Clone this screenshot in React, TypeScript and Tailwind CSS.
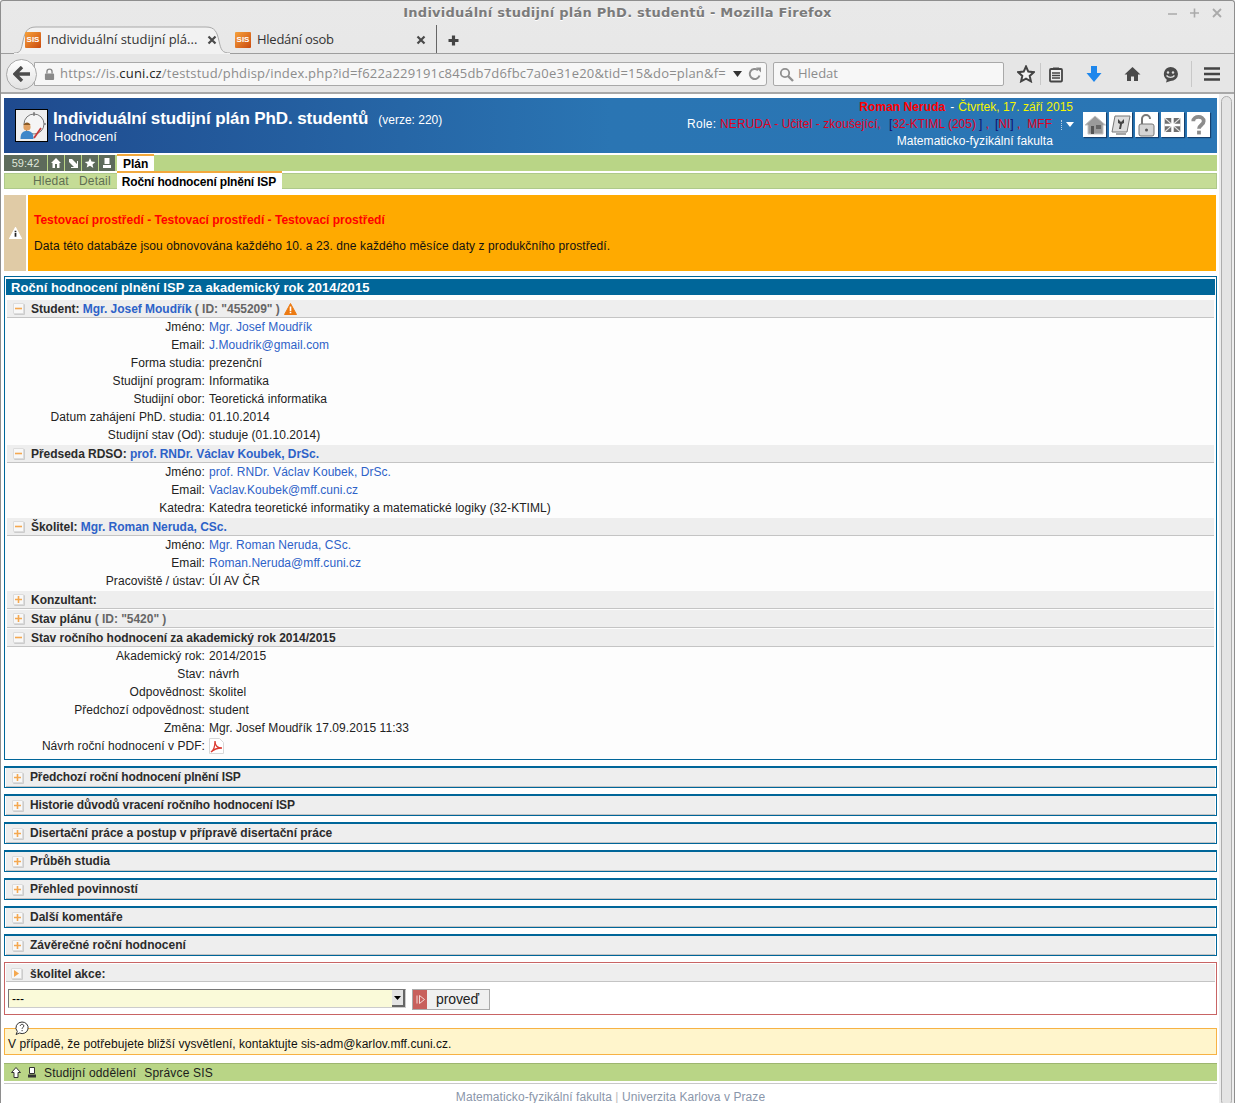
import type { ReactNode } from 'react'

const FONT = "font-['Liberation_Sans',Arial,sans-serif]"

function SisIcon() {
  return (
    <span className="flex h-4 w-4 shrink-0 items-center justify-center rounded-[1px] bg-gradient-to-br from-[#f6a13a] to-[#c9490f] font-['Liberation_Sans',sans-serif] text-[8px] font-bold leading-none text-white">
      SIS
    </span>
  )
}

function CloseX() {
  return (
    <svg width="10" height="10" viewBox="0 0 10 10">
      <path d="M1.500 1.500l7 7M8.500 1.500l-7 7" stroke="#4a4a4a" strokeWidth="2.200" />
    </svg>
  )
}

function TitleBar() {
  return (
    <div className="relative flex h-[24px] shrink-0 items-center justify-center">
      <span className="font-['DejaVu_Sans',sans-serif] text-[13px] font-bold tracking-[0.25px] text-[#7b7b7b] [text-shadow:0_1px_0_#fff]">
        Individuální studijní plán PhD. studentů - Mozilla Firefox
      </span>
      <div className="absolute right-[12px] top-[7px] flex items-center gap-[12px]">
        <svg width="10" height="10" viewBox="0 0 10 10"><path d="M0 6h9" stroke="#aaa" strokeWidth="1.600" /></svg>
        <svg width="10" height="10" viewBox="0 0 10 10"><path d="M0 5h9M4.500 .5v9" stroke="#aaa" strokeWidth="1.600" /></svg>
        <svg width="10" height="10" viewBox="0 0 10 10"><path d="M1 1l8 8M9 1l-8 8" stroke="#aaa" strokeWidth="1.800" /></svg>
      </div>
    </div>
  )
}

function TabBar() {
  return (
    <div className="flex h-[29px] shrink-0 items-stretch border-b border-[#9d9d9d] pl-[13px]">
      <div className="relative flex w-[216px] items-center pl-[11px] pr-[13px] pt-[2px]">
        <svg className="absolute -bottom-px left-0 h-[29px] w-[216px]" viewBox="0 0 216 29" preserveAspectRatio="none">
          <path d="M0 28c7 0 7-3 9-12 2-9 4-14 13-14h170c9 0 11 5 13 14 2 9 3 12 11 12v1H0z" fill="#f2f2f2" stroke="#a8a8a8" />
          <path d="M0 29h216" stroke="#f2f2f2" strokeWidth="2" />
        </svg>
        <span className="relative z-10 flex w-full items-center">
          <SisIcon />
          <span className="ml-[6px] flex-1 font-['Open_Sans',sans-serif] text-[13px] text-[#333]">Individuální studijní plá...</span>
          <CloseX />
        </span>
      </div>
      <div className="flex w-[207px] items-center border-r border-[#666] pl-[5px] pr-[10px] pt-[2px]">
        <SisIcon />
        <span className="ml-[6px] flex-1 font-['Open_Sans',sans-serif] text-[13px] tracking-[-0.25px] text-[#333]">Hledání osob</span>
        <CloseX />
      </div>
      <div className="flex items-center pl-[11px] pt-[2px]">
        <svg width="11" height="11" viewBox="0 0 11 11"><path d="M5.500 .5v10M.5 5.500h10" stroke="#444" strokeWidth="3.200" /></svg>
      </div>
    </div>
  )
}

function NavBar() {
  return (
    <div className="flex h-[40px] shrink-0 items-center border-b-2 border-[#a8a8a8] bg-[#e6e6e6] pl-[5px] pr-[9px] pt-[2px]">
      <div className="z-10 flex h-[31px] w-[31px] items-center justify-center rounded-full border border-[#a9a9a9] bg-gradient-to-b from-white to-[#e2e2e2]">
        <svg width="18" height="16" viewBox="0 0 18 16"><path d="M9 1L2 8l7 7M3 8h14" stroke="#4c4c4c" strokeWidth="3.400" fill="none" /></svg>
      </div>
      <div className="-ml-[3px] flex h-[24px] w-[733px] items-center rounded-r-[3px] border border-[#a9a9a9] bg-[#f7f7f7] pl-[9px] pr-[4px]">
        <svg width="11" height="12" viewBox="0 0 12 13"><rect x="1" y="6" width="10" height="7" rx="1" fill="#8a8a8a" /><path d="M3.200 6V4a2.800 2.800 0 015.600 0v2" stroke="#8a8a8a" strokeWidth="1.500" fill="none" /></svg>
        <span className="ml-[5px] flex-1 whitespace-nowrap font-['Open_Sans',sans-serif] text-[13px] tracking-[0.19px] text-[#8c8c8c]">
          https://is.<span className="text-[#222]">cuni.cz</span>/teststud/phdisp/index.php?id=f622a229191c845db7d6fbc7a0e31e20&amp;tid=15&amp;do=plan&amp;f=
        </span>
        <svg className="ml-[4px]" width="9" height="6" viewBox="0 0 9 6"><path d="M0 0h9L4.500 6z" fill="#333" /></svg>
        <svg className="ml-[6px]" width="14" height="14" viewBox="0 0 14 14"><path d="M11.500 8.500A5 5 0 1 1 10 3.200" stroke="#8f8f8f" strokeWidth="2" fill="none" /><path d="M8 .5h5v5z" fill="#8f8f8f" /></svg>
      </div>
      <div className="ml-[6px] flex h-[24px] w-[231px] items-center rounded-[2px] border border-[#a9a9a9] bg-[#f7f7f7] pl-[5px]">
        <svg width="15" height="15" viewBox="0 0 15 15"><circle cx="6" cy="6" r="4.200" stroke="#909090" strokeWidth="1.800" fill="none" /><path d="M9 9l5 5" stroke="#909090" strokeWidth="2.400" /></svg>
        <span className="ml-[4px] font-['Open_Sans',sans-serif] text-[13px] text-[#8c8c8c]">Hledat</span>
      </div>
      <div className="ml-[13px] flex h-[26px] items-center">
        <svg width="18" height="18" viewBox="0 0 18 18"><path d="M9 1.500l2.300 5.100 5.500.6-4.100 3.700 1.200 5.400L9 13.600l-4.900 2.700 1.200-5.400L1.200 7.200l5.500-.6z" fill="#f4f4f4" stroke="#444" strokeWidth="2" /></svg>
        <span className="ml-[5px] h-[22px] w-px bg-[#c8c8c8]" />
        <svg className="ml-[7px]" width="16" height="17" viewBox="0 0 16 17"><rect x="2" y="3" width="12" height="12.500" rx="1" fill="#eee" stroke="#444" strokeWidth="1.800" /><path d="M5 1.500h6v2H5z" fill="#444" /><path d="M4 7h8M4 9.500h8M4 12h8" stroke="#444" strokeWidth="1.300" /></svg>
        <svg className="ml-[22px]" width="16" height="18" viewBox="0 0 16 18"><path d="M5 1h6v7h4.500L8 17 .5 8H5z" fill="#1e87ec" /></svg>
        <svg className="ml-[22px]" width="17" height="16" viewBox="0 0 17 16"><path d="M8.500 1L.5 8.500h2.500V15h4v-4.500h3V15h4V8.500h2.500z" fill="#4a4a4a" /></svg>
        <svg className="ml-[21px]" width="17" height="17" viewBox="0 0 17 17"><path d="M8.500 1a7.500 7 0 110 14L4 16.500l.8-2.800A7 7 0 018.500 1z" fill="#4a4a4a" /><circle cx="6" cy="6.500" r="1.200" fill="#ddd" /><circle cx="11" cy="6.500" r="1.200" fill="#ddd" /><path d="M4.500 9.500c2 2.500 6 2.500 8 0" stroke="#ddd" strokeWidth="1.400" fill="none" /></svg>
        <span className="ml-[12px] h-[26px] w-px bg-[#c8c8c8]" />
        <svg className="ml-[12px]" width="16" height="14" viewBox="0 0 16 14"><path d="M0 1.500h16M0 7h16M0 12.500h16" stroke="#444" strokeWidth="2.600" /></svg>
      </div>
    </div>
  )
}

function HeaderButton({ children }: { children: ReactNode }) {
  return (
    <div className="flex h-[25px] w-[23px] items-center justify-center bg-white shadow-[1px_1px_1px_#16406e]">
      {children}
    </div>
  )
}

function PageHeader() {
  return (
    <div className="flex h-[55px] items-stretch bg-gradient-to-r from-[#1f4a8e] via-[#2a75b3] via-50% to-[#2a76b5] text-white">
      <div className="ml-[11px] mt-[11px] flex h-[33px] w-[33px] items-center justify-center border border-black bg-[#efefef]">
        <svg width="28" height="28" viewBox="0 0 28 28">
          <circle cx="16" cy="12" r="10" fill="#f5f5f5" stroke="#777" strokeWidth="1" />
          <path d="M16 0v4M26 12h2" stroke="#555" />
          <circle cx="9" cy="15" r="3.600" fill="#e0a163" />
          <path d="M5.500 13c1-3.500 6-3.500 7 0z" fill="#8a5a26" />
          <path d="M2.500 27c0-7 3-8 6.500-8s6.500 1 6.500 8z" fill="#3f87c9" />
          <path d="M16 26l7-10" stroke="#c83a3a" strokeWidth="1.800" />
        </svg>
      </div>
      <div className="ml-[5px] mt-[10px] flex flex-col">
        <div className="flex items-baseline">
          <span className="text-[17px] font-bold leading-[21px] tracking-[-0.1px]">Individuální studijní plán PhD. studentů</span>
          <span className="ml-[10px] text-[12px]">(verze: 220)</span>
        </div>
        <span className="ml-px text-[13px] leading-[16px]">Hodnocení</span>
      </div>
      <div className="ml-auto flex flex-col items-end pt-px text-[12px] leading-[17px]">
        <div className="mr-px flex">
          <span className="font-bold tracking-[0.05px] text-[#f00]">Roman Neruda</span>
          <span className="ml-[5px] text-white">-</span>
          <span className="ml-[4px] text-[#f5f500]">Čtvrtek, 17. září 2015</span>
        </div>
        <div className="flex items-center whitespace-pre">
          <span className="tracking-[0.3px]">Role: </span>
          <span className="tracking-[0.1px] text-[#e3001e]">NERUDA - Učitel - zkoušející,</span>
          <span className="ml-[8px] text-[#10106e]">[</span>
          <span className="text-[#e3001e]">32-KTIML (205)</span>
          <span className="ml-[3px] text-[#10106e]">]</span>
          <span className="text-[#e3001e]"> ,</span>
          <span className="ml-[6px] text-[#10106e]">[</span>
          <span className="text-[#e3001e]">NI</span>
          <span className="text-[#10106e]">]</span>
          <span className="text-[#e3001e]"> ,</span>
          <span className="ml-[7px] text-[#e3001e]">MFF</span>
          <span className="ml-[9px] h-[10px] border-l border-dotted border-[#bcd]" />
          <svg className="ml-[4px]" width="8" height="5" viewBox="0 0 8 5"><path d="M0 0h8L4 5z" fill="#fff" /></svg>
        </div>
        <div className="mr-[21px] tracking-[0.08px]">Matematicko-fyzikální fakulta</div>
      </div>
      <div className="ml-[9px] mr-[7px] mt-[14px] flex h-[25px] gap-[3px]">
        <HeaderButton>
          <svg width="22" height="22" viewBox="0 0 22 22"><path d="M11 2L1 11h3v9h15v-9h2.500z" fill="#9a9a9a" stroke="#c4c4c4" /><rect x="7" y="12" width="3" height="8" fill="#555" /><rect x="12" y="11" width="5" height="4" fill="#666" /></svg>
        </HeaderButton>
        <HeaderButton>
          <svg width="20" height="22" viewBox="0 0 20 22"><path d="M4 2h15l-3 16H1z" fill="#ddd" stroke="#777" /><path d="M7 5l3 3 3-3v4l-2 1-1 5H8l1-5-2-1z" fill="#444" /><path d="M5 20h10" stroke="#888" strokeWidth="1.500" /></svg>
        </HeaderButton>
        <HeaderButton>
          <svg width="20" height="24" viewBox="0 0 20 24"><path d="M5 11V6a4 4 0 018 0" stroke="#777" strokeWidth="2" fill="none" /><rect x="2" y="11" width="15" height="12" rx="2" fill="#d4d4d4" stroke="#777" /><circle cx="9.500" cy="17" r="1.500" fill="#555" /></svg>
        </HeaderButton>
        <HeaderButton>
          <svg width="17" height="14" viewBox="0 0 19 17">
            <rect x="0" y="0" width="19" height="17" fill="#6f6f6f" />
            <path d="M0 0l19 17M19 0L0 17" stroke="#e4e4e4" strokeWidth="1.300" />
            <path d="M9.500 0v17M0 8.500h19" stroke="#fff" strokeWidth="3" />
          </svg>
        </HeaderButton>
        <HeaderButton>
          <svg width="17" height="22" viewBox="0 0 18 22"><path d="M3.500 7c0-6 11-6 11 0 0 4-5 4-5 8" stroke="#8c8c8c" strokeWidth="4" fill="none" /><rect x="7.500" y="17" width="4" height="4" fill="#8c8c8c" /></svg>
        </HeaderButton>
      </div>
    </div>
  )
}

function MenuRows() {
  return (
    <div className="mt-[2px] text-[12px]">
      <div className="flex h-[16px] items-stretch bg-[#b9d586]">
        <span className="flex w-[43px] items-center justify-center bg-[#5d6b5b] text-[11px] text-[#dfe6da]">59:42</span>
        {[
          <path key="h" d="M6 1L1 6h1.500v5h7V6H11zM5 7h2v4H5z" fill="#fff" fillRule="evenodd" />,
          <path key="a" d="M2 2l3 0 5 5V4l1 0v7H4l0-1h3L2 5z" fill="#fff" />,
          <path key="s" d="M6 1l1.500 3.500 3.800.4-2.800 2.500.8 3.700L6 8.800l-3.300 1.800.8-3.700L.7 4.900l3.800-.4z" fill="#fff" />,
          <path key="p" d="M3.500 1h5v6h-5zM2 8h8v3H2z" fill="#fff" />,
        ].map((icon, i) => (
          <span key={i} className="ml-px flex w-[16px] items-center justify-center bg-[#5d6b5b]">
            <svg width="12" height="12" viewBox="0 0 12 12">{icon}</svg>
          </span>
        ))}
        <span className="z-10 ml-[2px] -mt-px flex h-[17px] items-center border-t-2 border-[#f2a83c] bg-white px-[6px] font-bold text-black">Plán</span>
      </div>
      <div className="mt-[2px] flex h-[16px] items-stretch border border-[#aec98a] bg-[#c5dc96]">
        <span className="ml-[28px] flex items-center pb-px tracking-[0.2px] text-[#5f6f52]">Hledat</span>
        <span className="ml-[10px] flex items-center pb-px tracking-[0.2px] text-[#5f6f52]">Detail</span>
        <span className="z-10 ml-[6px] -mt-[3px] flex h-[20px] w-[165px] items-center self-start border-t-2 border-[#f2a83c] bg-white px-[5px] pb-px font-bold tracking-[-0.17px] text-black">Roční hodnocení plnění ISP</span>
      </div>
    </div>
  )
}

function TestBanner() {
  return (
    <div className="mr-px mt-[6px] flex h-[76px] text-[12px]">
      <div className="flex w-[22px] items-center justify-center bg-[#e0cba6]">
        <svg width="13" height="12" viewBox="0 0 12 11"><path d="M6 .5L11.500 10.500H.5z" fill="#fff" stroke="#fff" strokeLinejoin="round" /><path d="M5.200 3.500h1.600v1.300H5.200zM5.200 5.500h1.600v3.500H5.200z" fill="#222" /></svg>
      </div>
      <div className="ml-[2px] flex flex-1 flex-col bg-[#ffaa00] pl-[6px]">
        <p className="mt-[17px] font-bold leading-[16px] text-[#f00]">Testovací prostředí - Testovací prostředí - Testovací prostředí</p>
        <p className="mt-[10px] leading-[16px] tracking-[0.09px] text-[#111]">Data této databáze jsou obnovována každého 10. a 23. dne každého měsíce daty z produkčního prostředí.</p>
      </div>
    </div>
  )
}

function Toggle({ open }: { open?: boolean }) {
  return (
    <span className="mr-[7px] flex h-[11px] w-[11px] shrink-0 items-center justify-center rounded-[1px] border border-[#dcdcdc] bg-[#f8f8f8] shadow-[1px_1px_0_#ccc]">
      <svg width="7" height="7" viewBox="0 0 7 7">
        <path d={open ? 'M0 3.500h7' : 'M0 3.500h7M3.500 0v7'} stroke="#f4a850" strokeWidth="1.600" />
      </svg>
    </span>
  )
}

function GroupHead({ open, children }: { open?: boolean; children: ReactNode }) {
  return (
    <div className="mx-px mt-px flex h-[18px] items-center border-b border-[#c4c4c4] bg-[#eeeeee] pl-[6px] text-[12px] font-bold tracking-[-0.03px] text-[#2b2b2b]">
      <Toggle open={open} />
      <span className="whitespace-pre">{children}</span>
    </div>
  )
}

function Row({ label, children }: { label: string; children: ReactNode }) {
  return (
    <div className="flex h-[18px] items-center text-[12px] tracking-[0.06px] text-[#222]">
      <span className="w-[199px] shrink-0 text-right">{label}:</span>
      <span className="ml-[4px]">{children}</span>
    </div>
  )
}

function A({ children, bold }: { children: ReactNode; bold?: boolean }) {
  return <span className={bold ? 'font-bold text-[#2d62c8]' : 'text-[#2d62c8]'}>{children}</span>
}

function Gray({ children }: { children: ReactNode }) {
  return <span className="text-[#666]">{children}</span>
}

function PlanSection() {
  return (
    <div className="mt-[5px] h-[484px] border border-[#006699] bg-[#fdfdfd] px-px pt-[2px]">
      <div className="flex h-[16px] items-center bg-[#006699] pl-[5px] pt-px text-[13px] font-bold tracking-[0.06px] text-white">
        Roční hodnocení plnění ISP za akademický rok 2014/2015
      </div>
      <div className="mt-[4px] flex flex-col">
        <GroupHead open>
          <span className="inline-flex items-center whitespace-pre">
            Student: <A bold>Mgr. Josef Moudřík</A><Gray> ( ID: "455209" ) </Gray>
            <svg className="ml-px" width="13" height="12" viewBox="0 0 13 12"><path d="M6.500.5L12.500 11.500H.5z" fill="#ec7a12" stroke="#ec7a12" strokeLinejoin="round" /><path d="M5.700 3.500h1.600v4.500H5.700zM5.700 8.800h1.600v1.500H5.700z" fill="#fff" /></svg>
          </span>
        </GroupHead>
        <Row label="Jméno"><A>Mgr. Josef Moudřík</A></Row>
        <Row label="Email"><A>J.Moudrik@gmail.com</A></Row>
        <Row label="Forma studia">prezenční</Row>
        <Row label="Studijní program">Informatika</Row>
        <Row label="Studijní obor">Teoretická informatika</Row>
        <Row label="Datum zahájení PhD. studia">01.10.2014</Row>
        <Row label="Studijní stav (Od)">studuje (01.10.2014)</Row>
        <GroupHead open>Předseda RDSO: <A bold>prof. RNDr. Václav Koubek, DrSc.</A></GroupHead>
        <Row label="Jméno"><A>prof. RNDr. Václav Koubek, DrSc.</A></Row>
        <Row label="Email"><A>Vaclav.Koubek@mff.cuni.cz</A></Row>
        <Row label="Katedra">Katedra teoretické informatiky a matematické logiky (32-KTIML)</Row>
        <GroupHead open>Školitel: <A bold>Mgr. Roman Neruda, CSc.</A></GroupHead>
        <Row label="Jméno"><A>Mgr. Roman Neruda, CSc.</A></Row>
        <Row label="Email"><A>Roman.Neruda@mff.cuni.cz</A></Row>
        <Row label="Pracoviště / ústav">ÚI AV ČR</Row>
        <GroupHead>Konzultant:</GroupHead>
        <GroupHead>Stav plánu <Gray>( ID: "5420" )</Gray></GroupHead>
        <GroupHead open>Stav ročního hodnocení za akademický rok 2014/2015</GroupHead>
        <Row label="Akademický rok">2014/2015</Row>
        <Row label="Stav">návrh</Row>
        <Row label="Odpovědnost">školitel</Row>
        <Row label="Předchozí odpovědnost">student</Row>
        <Row label="Změna">Mgr. Josef Moudřík 17.09.2015 11:33</Row>
        <Row label="Návrh roční hodnocení v PDF">
          <svg className="block" width="15" height="16" viewBox="0 0 15 16">
            <path d="M.5.5h10l4 4v11H.5z" fill="#fff" stroke="#d8d8d8" />
            <path d="M2 14c3-2 4-6 4-11 0 4 2 7 7 7-4 0-8 1-11 4z" fill="none" stroke="#dc3c32" strokeWidth="1.300" />
          </svg>
        </Row>
      </div>
    </div>
  )
}

function Collapsed({ title, tight }: { title: string; tight?: boolean }) {
  return (
    <div className="mt-[6px] h-[22px] border-x border-b border-t-2 border-[#006699] px-px">
      <div className={`flex h-[19px] items-center border-b border-[#c4c4c4] bg-[#eeeeee] pl-[6px] text-[12px] font-bold text-[#2b2b2b] ${tight ? 'tracking-[-0.13px]' : 'tracking-[-0.01px]'}`}>
        <Toggle />
        {title}
      </div>
    </div>
  )
}

function ActionBox() {
  return (
    <div className="mt-[6px] h-[53px] border border-[#c86464] p-px">
      <div className="flex h-[18px] items-center border-b border-[#c4c4c4] bg-[#eeeeee] pl-[5px] pt-[2px] text-[12px] font-bold text-[#2b2b2b]">
        <span className="mr-[8px] flex h-[11px] w-[11px] items-center justify-center rounded-[1px] border border-[#dcdcdc] bg-[#f8f8f8] shadow-[1px_1px_0_#ccc]">
          <svg width="5" height="7" viewBox="0 0 5 7"><path d="M0 0l5 3.500L0 7z" fill="#f4a850" /></svg>
        </span>
        školitel akce:
      </div>
      <div className="ml-[2px] mt-[7px] flex items-start">
        <div className="flex h-[19px] w-[398px] items-center justify-between border border-b-[#ccc] border-l-[#777] border-r-[#ccc] border-t-[#777] bg-[#fafad9] pl-[3px] text-[12px] text-black">
          ---
          <span className="flex h-[17px] w-[13px] items-center justify-center border-b-2 border-r-2 border-[#666] bg-[#e4e4e4]">
            <svg width="7" height="4" viewBox="0 0 7 4"><path d="M0 0h7L3.500 4z" fill="#000" /></svg>
          </span>
        </div>
        <div className="ml-[6px] flex h-[21px] w-[78px] items-stretch border border-[#aaa] bg-[#f0f0f0] text-[14px] text-[#222]">
          <span className="flex w-[14px] items-center justify-center bg-[#c8605c]">
            <svg width="9" height="9" viewBox="0 0 9 9"><path d="M1 .5v8M3.500.5l5 4-5 4z" fill="none" stroke="#f4d9d6" /></svg>
          </span>
          <span className="ml-[9px] flex items-center tracking-[-0.1px]">proveď</span>
        </div>
      </div>
    </div>
  )
}

function InfoBox() {
  return (
    <div className="relative mt-[13px] flex h-[27px] items-center border border-[#f7b244] bg-[#fff5cc] pl-[3px] pt-[4px] text-[12px] tracking-[0.05px] text-[#111]">
      <svg className="absolute -top-[8px] left-[10px]" width="14" height="15" viewBox="0 0 14 15">
        <path d="M7 1a6 5.800 0 11-2.500 11L1 13.500l1.300-3A6 5.800 0 017 1z" fill="#fff" stroke="#333" />
        <path d="M5.300 5c0-2.200 3.500-2.200 3.500 0 0 1.300-1.700 1.300-1.700 2.800M7.100 9v1.200" stroke="#333" fill="none" />
      </svg>
      V případě, že potřebujete bližší vysvětlení, kontaktujte sis-adm@karlov.mff.cuni.cz.
    </div>
  )
}

function BottomBar() {
  return (
    <div className="mt-[8px] border-b border-[#c8c8c8] pb-[2px]">
      <div className="flex h-[18px] items-center border-t border-[#9db56f] bg-[#b9d586] pl-[7px] text-[12px] tracking-[0.17px] text-[#1c1c1c]">
        <svg width="10" height="11" viewBox="0 0 10 11"><path d="M5 .5L.5 5.500H3v5h4v-5h2.500z" fill="#fff" stroke="#333" /></svg>
        <svg className="ml-[6px]" width="10" height="11" viewBox="0 0 10 11"><path d="M2.500.5h5v6h-5z" fill="#fff" stroke="#333" /><path d="M1 7.500h8v3H1z" fill="#333" /></svg>
        <span className="ml-[7px]">Studijní oddělení</span>
        <span className="ml-[8px]">Správce SIS</span>
      </div>
    </div>
  )
}

function Scrollbar() {
  return (
    <div className="flex w-[15px] shrink-0 justify-center bg-[#eeeeee] pt-[2px]">
      <div className="h-[1010px] w-[11px] rounded-[6px] border border-[#adadad] bg-[#e4e4e4]" />
    </div>
  )
}

export default function App() {
  return (
    <div className={`${FONT} flex h-[1103px] w-[1235px] flex-col overflow-hidden rounded-t-[3px] border border-b-0 border-[#8e8e8e] bg-gradient-to-b from-[#e9e9e9] via-[#dcdcdc] to-[#d6d6d6]`}>
      <TitleBar />
      <TabBar />
      <NavBar />
      <div className="flex min-h-0 flex-1 bg-white">
        <div className="ml-[3px] mr-[2px] mt-[4px] min-w-0 flex-1">
          <PageHeader />
          <MenuRows />
          <TestBanner />
          <PlanSection />
          <Collapsed tight title="Předchozí roční hodnocení plnění ISP" />
          <Collapsed tight title="Historie důvodů vracení ročního hodnocení ISP" />
          <Collapsed title="Disertační práce a postup v přípravě disertační práce" />
          <Collapsed title="Průběh studia" />
          <Collapsed title="Přehled povinností" />
          <Collapsed title="Další komentáře" />
          <Collapsed title="Závěrečné roční hodnocení" />
          <ActionBox />
          <InfoBox />
          <BottomBar />
          <p className="mt-[4px] text-center text-[12px] tracking-[0.07px] text-[#8a96aa]">
            Matematicko-fyzikální fakulta <span className="text-[#bbb]">|</span> Univerzita Karlova v Praze
          </p>
        </div>
        <Scrollbar />
      </div>
    </div>
  )
}
